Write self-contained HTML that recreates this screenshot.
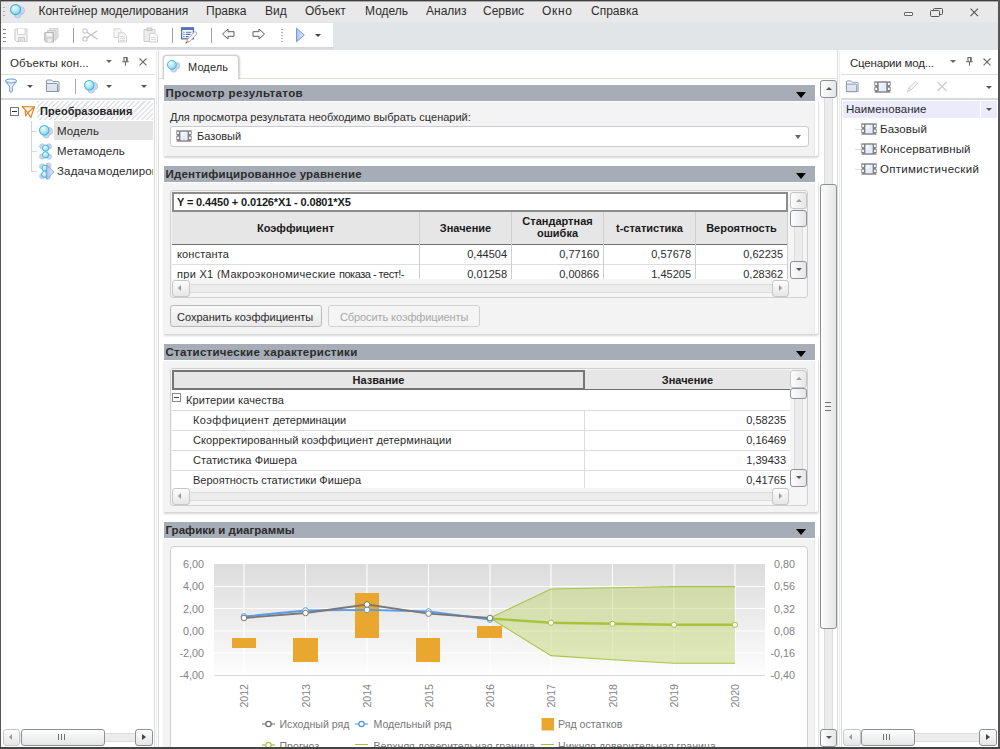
<!DOCTYPE html>
<html lang="ru">
<head>
<meta charset="utf-8">
<title>Контейнер моделирования</title>
<style>
html,body{margin:0;padding:0;}
body{width:1000px;height:749px;overflow:hidden;background:#fff;font-family:"Liberation Sans",sans-serif;font-size:11px;color:#2b2b2b;position:relative;}
.a{position:absolute;}
.t{position:absolute;white-space:nowrap;line-height:14px;}
#win{position:absolute;left:0;top:0;width:1000px;height:749px;overflow:hidden;}
/* frame */
#ftop{left:0;top:0;width:1000px;height:2px;background:linear-gradient(#3e3e3e 0,#3e3e3e 50%,#a8a8a8 50%,#a8a8a8 100%);}
#fleft{left:0;top:0;width:1px;height:749px;background:#555;}
#fright{left:998px;top:0;width:2px;height:749px;background:#555;}
#fbot{left:0;top:747px;width:1000px;height:2px;background:#444;}
/* menu */
#menu{left:1px;top:1px;width:998px;height:21px;background:#e9e9e9;}
.mi{position:absolute;top:4px;font-size:12px;line-height:14px;color:#2e2e2e;white-space:nowrap;}
/* toolbar */
#tb{left:1px;top:23px;width:332px;height:24px;background:#fff;}
#tbr{left:1px;top:22px;width:998px;height:28px;background:#e2e5e8;}
#strip{left:1px;top:47px;width:332px;height:3px;background:linear-gradient(#d3d5da,#d8dade 50%,#e2e5e8);}
/* left panel */
#lp{left:1px;top:50px;width:154px;height:697px;background:#fff;}
/* center */
#cp{left:163px;top:50px;width:674px;height:697px;background:#fff;}
/* right */
#rp{left:843px;top:50px;width:155px;height:697px;background:#fff;}
.sech{position:absolute;left:164px;width:651px;height:16px;background:#a6adb7;}
.sech span{position:absolute;left:1.500px;top:1px;font-weight:bold;font-size:11.500px;letter-spacing:0.28px;line-height:14px;color:#2b2b2b;white-space:nowrap;}
.sech i{position:absolute;left:632.300px;top:7px;width:0;height:0;border-left:5px solid transparent;border-right:5px solid transparent;border-top:6px solid #000;}
.secb{position:absolute;left:164px;width:651px;border-top:1px solid #fff;box-sizing:border-box;background:#f3f3f3;box-shadow:0 2px 2px rgba(0,0,0,.17);}
.secb::after{content:"";position:absolute;left:651px;top:-1px;bottom:0;width:4px;box-sizing:border-box;background:#fff;border-right:1px solid #e4e4e4;border-bottom-right-radius:3px;box-shadow:0 2px 2px rgba(0,0,0,.17);}
.sbb{box-sizing:border-box;border:1px solid #8b9099;border-radius:3px;background:linear-gradient(#fdfdfd,#e6e6e6);}
.sbbv{box-sizing:border-box;border:1px solid #8b9099;border-radius:3px;background:linear-gradient(90deg,#fdfdfd,#e6e6e6);}
.b{font-weight:bold;color:#1a1a1a}
.c{text-align:center}
.r{text-align:right}
.vl{width:1px;background:#cfcfcf}
.btn{box-sizing:border-box;border:1px solid #b9b9b9;border-radius:3px;background:linear-gradient(#f9f9f9,#e9e9e9);}
.hl{left:172px;width:618px;height:1px;background:#dcdcdc}
</style>
</head>
<body>
<div id="win">
<div class="a" id="menu"></div>
<div class="a" id="tbr"></div>
<div class="a" id="tb"></div>
<div class="a" id="strip"></div>
<div class="a" id="lp"></div>
<div class="a" id="cp"></div>
<div class="a" id="rp"></div>
<!--MENU-->
<!-- menu -->
<div class="a" style="left:3px;top:7px;width:2px;height:1px;background:#ababab;box-shadow:0 4px 0 #ababab,0 8px 0 #ababab;"></div>
<svg class="a" style="left:9px;top:3px" width="18" height="17" viewBox="0 0 18 17">
 <defs><radialGradient id="gA" cx="35%" cy="30%" r="75%"><stop offset="0" stop-color="#f0fbfc"/><stop offset="0.6" stop-color="#b5e4ec"/><stop offset="1" stop-color="#7fd0e6"/></radialGradient></defs>
 <circle cx="11.7" cy="7.6" r="3.9" fill="#ccd5ee" stroke="#b3bfe3" stroke-width=".8"/>
 <circle cx="8.7" cy="11.6" r="3.4" fill="#ccd5ee" stroke="#b3bfe3" stroke-width=".8"/>
 <circle cx="6.6" cy="6.6" r="5" fill="url(#gA)" stroke="#35b6e6" stroke-width="1.1"/>
</svg>
<span class="mi" style="left:38.500px;letter-spacing:-0.02px">Контейнер моделирования</span>
<span class="mi" style="left:206px">Правка</span>
<span class="mi" style="left:265px">Вид</span>
<span class="mi" style="left:305px">Объект</span>
<span class="mi" style="left:365px">Модель</span>
<span class="mi" style="left:426px">Анализ</span>
<span class="mi" style="left:483px">Сервис</span>
<span class="mi" style="left:542px;letter-spacing:0.7px">Окно</span>
<span class="mi" style="left:591px">Справка</span>
<!-- window buttons -->
<div class="a" style="left:904px;top:12px;width:7px;height:2px;border:1px solid #666;border-radius:1px;box-sizing:content-box;background:#f4f4f4"></div>
<div class="a" style="left:933px;top:8px;width:8px;height:5px;border:1px solid #555;border-radius:1.500px"></div>
<div class="a" style="left:930px;top:10px;width:8px;height:5px;border:1px solid #555;border-radius:1.500px;background:#e9e9e9"></div>
<svg class="a" style="left:969px;top:7px" width="11" height="11" viewBox="0 0 11 11"><path d="M1.5 1.700 L9 9.200 M9 1.700 L1.5 9.200" stroke="#555" stroke-width="1.1" fill="none"/></svg>
<!--/MENU-->
<!--TOOLBAR-->
<!-- toolbar -->
<div class="a" style="left:3px;top:29px;width:3px;height:1px;background:#8c8c8c;box-shadow:0 4px 0 #8c8c8c,0 8px 0 #8c8c8c,0 12px 0 #8c8c8c;"></div>
<!-- save (disabled) -->
<svg class="a" style="left:14px;top:28px" width="15" height="15" viewBox="0 0 15 15"><path d="M1.5 1 H13 V13.5 H2.5 L1 12 V1.5 Z" fill="#f3f3f3" stroke="#c9c9c9"/><path d="M3.5 1 V6.5 H11 V1" fill="#fff" stroke="#d4d4d4"/><path d="M4.5 13.5 V9.5 H10.5 V13.5" fill="#e9e9e9" stroke="#c9c9c9"/><rect x="6" y="10.5" width="1.5" height="3" fill="#d0d0d0"/></svg>
<!-- save all (disabled) -->
<svg class="a" style="left:44px;top:28px" width="15" height="15" viewBox="0 0 15 15"><path d="M5.5 .5 H14 V10 H5.5Z" fill="#ededed" stroke="#cfcfcf"/><path d="M3.5 2.5 H12 V12 H3.5Z" fill="#e4e4e4" stroke="#c6c6c6"/><path d="M1 4.5 H9.5 V14 H2 L.7 12.8 V4.8Z" fill="#d6d6d6" stroke="#b5b5b5"/><rect x="2.5" y="5" width="5.5" height="3.5" fill="#f4f4f4"/><rect x="3.5" y="11" width="4" height="3" fill="#efefef"/></svg>
<div class="a" style="left:73px;top:28px;width:1px;height:15px;background:#9f9f9f"></div>
<!-- scissors -->
<svg class="a" style="left:82px;top:28px" width="17" height="14" viewBox="0 0 17 14"><circle cx="3" cy="3" r="2.2" fill="none" stroke="#c9c9c9" stroke-width="1.2"/><circle cx="3" cy="11" r="2.2" fill="none" stroke="#c9c9c9" stroke-width="1.2"/><path d="M4.8 4.2 L15.5 11.3 M4.8 9.8 L15.5 2.7" stroke="#c4c4c4" stroke-width="1.3" fill="none"/></svg>
<!-- copy -->
<svg class="a" style="left:113px;top:28px" width="15" height="15" viewBox="0 0 15 15"><path d="M1 .8 H6.5 L8.5 3 V9.5 H1Z" fill="#f6f6f6" stroke="#d6d6d6"/><path d="M5.5 4.8 H11 L13.5 7.5 V14 H5.5Z" fill="#f6f6f6" stroke="#d2d2d2"/><path d="M7 8.5H12M7 10.5H12M7 12.5H12" stroke="#dcdcdc"/></svg>
<!-- paste -->
<svg class="a" style="left:143px;top:27px" width="16" height="16" viewBox="0 0 16 16"><path d="M1 2.5 H12 V14.5 H1Z" fill="#ececec" stroke="#cdcdcd"/><path d="M4 1 H9 V3.5 H4Z" fill="#e2e2e2" stroke="#c4c4c4"/><path d="M6.5 6.5 H12 L14.5 9 V15 H6.5Z" fill="#fafafa" stroke="#d0d0d0"/><path d="M8 10.5H13M8 12.5H13" stroke="#dcdcdc"/></svg>
<div class="a" style="left:172px;top:28px;width:1px;height:15px;background:#9f9f9f"></div>
<!-- edit -->
<svg class="a" style="left:180px;top:27px" width="18" height="17" viewBox="0 0 18 17"><rect x="1.6" y="1" width="11.800" height="10.800" fill="#fff" stroke="#4f73b8" stroke-width="1.3"/><rect x="1" y=".4" width="13" height="2.600" fill="#4f73b8"/><path d="M3.300 5.200H4.600M5.800 5.200H11.500M3.300 7.400H4.600M5.800 7.400H10.500M3.300 9.600H4.600M5.800 9.600H8.500" stroke="#4f73b8" stroke-width="1.1"/><path d="M6.800 13.200 L14.200 5 Q15.200 4.200 16.200 5.200 Q17.200 6.200 16.400 7.200 L9 15.300 Z" fill="#fafafa" stroke="#9a9a9a" stroke-width=".8"/><path d="M6.800 13.200 L9 15.300 L5.400 16.500 Z" fill="#f0922c"/><path d="M5.400 16.500 L6 15 L7 15.900 Z" fill="#444"/></svg>
<div class="a" style="left:211px;top:28px;width:1px;height:15px;background:#9f9f9f"></div>
<!-- arrows -->
<svg class="a" style="left:221px;top:27px" width="15" height="14" viewBox="0 0 15 14"><path d="M1.5 7 L7 2 V4.700 H13 V9.300 H7 V12 Z" fill="#fff" stroke="#555" stroke-width=".95" stroke-linejoin="miter"/></svg>
<svg class="a" style="left:251px;top:27px" width="15" height="14" viewBox="0 0 15 14"><path d="M13.500 7 L8 2 V4.700 H2 V9.300 H8 V12 Z" fill="#fff" stroke="#555" stroke-width=".95" stroke-linejoin="miter"/></svg>
<div class="a" style="left:281px;top:29px;width:2px;height:1px;background:#b5b5b5;box-shadow:0 3px 0 #b5b5b5,0 6px 0 #b5b5b5,0 9px 0 #b5b5b5,0 12px 0 #b5b5b5;"></div>
<svg class="a" style="left:295px;top:27px" width="11" height="16" viewBox="0 0 11 16"><defs><linearGradient id="gP" x1="0" y1="0" x2="1" y2="0"><stop offset="0" stop-color="#a9c0ee"/><stop offset="1" stop-color="#e6edfb"/></linearGradient></defs><path d="M1.5 1.2 L9.3 8 L1.5 14.8 Z" fill="url(#gP)" stroke="#7596dc" stroke-width="1"/></svg>
<div class="a" style="left:315px;top:34px;width:0;height:0;border-left:3px solid transparent;border-right:3px solid transparent;border-top:3px solid #444"></div>
<!--/TOOLBAR-->
<!--LEFT-->
<!-- left panel -->
<span class="t" style="left:10px;top:56px;font-size:11.500px;letter-spacing:0.05px;color:#2b2b2b">Объекты кон...</span>
<div class="a" style="left:106px;top:60px;width:0;height:0;border-left:3px solid transparent;border-right:3px solid transparent;border-top:3px solid #666"></div>
<svg class="a" style="left:121px;top:56px" width="9" height="11" viewBox="0 0 9 11"><path d="M2.500 1.500 H6.500 M3 1.500 V5.500 M5.800 1.500 V5.500 M1.200 5.800 H7.800 M4.500 6 V9.800" stroke="#666" stroke-width="1.1" fill="none"/><path d="M5 1.500H6.600V5.500H5z" fill="#666"/></svg>
<svg class="a" style="left:138px;top:57px" width="10" height="10" viewBox="0 0 10 10"><path d="M1.500 1.500 L8.500 8.300 M8.500 1.500 L1.500 8.300" stroke="#6a6a6a" stroke-width="1.05"/></svg>
<div class="a" style="left:1px;top:74px;width:154px;height:1px;background:#dadde3"></div>
<!-- left toolbar -->
<svg class="a" style="left:4px;top:78px" width="14" height="16" viewBox="0 0 14 16"><path d="M1.400 3.200 L5.700 8.800 V13.600 Q7 14.800 8.300 13.600 V8.800 L12.600 3.200" fill="#edf3fb" stroke="#6d9ad8" stroke-width="1"/><ellipse cx="7" cy="3" rx="5.600" ry="2" fill="#f4f8fd" stroke="#6d9ad8" stroke-width="1"/><path d="M3.200 3.600 Q7 5.600 10.800 3.600" fill="none" stroke="#a8c3e8" stroke-width=".8"/></svg>
<div class="a" style="left:26.500px;top:85px;width:0;height:0;border-left:3px solid transparent;border-right:3px solid transparent;border-top:3px solid #555"></div>
<svg class="a" style="left:45px;top:79px" width="16" height="14" viewBox="0 0 16 14"><path d="M1.5 12.5 V2 Q1.5 1 2.5 1 H6.5 L8 2.5 H13 Q14 2.5 14 3.5 V12.5 Z" fill="#eef1f6" stroke="#8b97ab" stroke-width="1"/><path d="M1.5 12.5 V4.5 H11.5 Q12.5 4.5 12.5 5.5 V12.5Z" fill="#dfe5ef" stroke="#8b97ab" stroke-width="1"/></svg>
<div class="a" style="left:75px;top:79px;width:1px;height:15px;background:#a9a9a9"></div>
<svg class="a" style="left:83px;top:79px" width="17" height="16" viewBox="0 0 18 17"><circle cx="11.7" cy="7.6" r="3.9" fill="#ccd5ee" stroke="#b3bfe3" stroke-width=".8"/><circle cx="8.7" cy="11.6" r="3.4" fill="#ccd5ee" stroke="#b3bfe3" stroke-width=".8"/><circle cx="6.6" cy="6.6" r="5" fill="url(#gA)" stroke="#35b6e6" stroke-width="1.1"/></svg>
<div class="a" style="left:106px;top:85px;width:0;height:0;border-left:3px solid transparent;border-right:3px solid transparent;border-top:3px solid #555"></div>
<div class="a" style="left:141px;top:85px;width:0;height:0;border-left:3px solid transparent;border-right:3px solid transparent;border-top:3px solid #555"></div>
<div class="a" style="left:1px;top:98px;width:154px;height:2px;background:#d6d9dd"></div>
<!-- tree -->
<div class="a" style="left:37px;top:101px;width:116px;height:19px;background:repeating-linear-gradient(135deg,#e0e3e7 0,#e0e3e7 1.5px,#fefefe 1.5px,#fefefe 3.6px);"></div>
<div class="a" style="left:54px;top:121px;width:99px;height:19px;background:#e4e4e4"></div>
<div class="a" style="left:31px;top:121px;width:1px;height:51px;background:#d4d4d4"></div>
<div class="a" style="left:31px;top:131px;width:6px;height:1px;background:#dadada"></div>
<div class="a" style="left:31px;top:151px;width:6px;height:1px;background:#dadada"></div>
<div class="a" style="left:31px;top:171px;width:6px;height:1px;background:#dadada"></div>
<div class="a" style="left:10px;top:107px;width:7px;height:7px;border:1px solid #777;background:#fff"></div>
<div class="a" style="left:12px;top:111px;width:5px;height:1px;background:#333"></div>
<svg class="a" style="left:21px;top:105px" width="15" height="14" viewBox="0 0 15 14"><path d="M1.2 1.5 L13.5 1.8 L9.8 12.6 L6.8 7.8 Z M6.8 7.8 L13.5 1.8 M4 4.5 L4.6 10.8 L6.8 7.8" fill="#fdf3e6" stroke="#e0882f" stroke-width="1.2" stroke-linejoin="round"/></svg>
<span class="t" style="left:40px;top:104px;font-size:11px;font-weight:bold;letter-spacing:0.05px;color:#262626">Преобразования</span>
<svg class="a" style="left:38px;top:123.500px" width="17" height="16" viewBox="0 0 18 17"><circle cx="11.7" cy="7.6" r="3.9" fill="#ccd5ee" stroke="#b3bfe3" stroke-width=".8"/><circle cx="8.7" cy="11.6" r="3.4" fill="#ccd5ee" stroke="#b3bfe3" stroke-width=".8"/><circle cx="6.6" cy="6.6" r="5" fill="url(#gA)" stroke="#35b6e6" stroke-width="1.1"/></svg>
<span class="t" style="left:57px;top:124px;font-size:11.500px;letter-spacing:0.12px;margin-top:-0.5px">Модель</span>
<svg class="a" style="left:39px;top:143px" width="14" height="17" viewBox="0 0 14 17"><g fill="#ccd5ee" stroke="#b3bfe3" stroke-width=".7"><circle cx="3.2" cy="3.4" r="2.6"/><circle cx="10" cy="3.4" r="2.6"/><circle cx="3.2" cy="13.6" r="2.6"/><circle cx="10" cy="13.6" r="2.6"/></g><circle cx="6.6" cy="5.2" r="3.1" fill="url(#gA)" stroke="#2fb2e4" stroke-width=".9"/><circle cx="6.6" cy="11.8" r="3.1" fill="url(#gA)" stroke="#2fb2e4" stroke-width=".9"/></svg>
<span class="t" style="left:57px;top:144px;font-size:11.500px;letter-spacing:0.12px;margin-top:-0.5px">Метамодель</span>
<svg class="a" style="left:39px;top:162px" width="16" height="18" viewBox="0 0 16 18"><g fill="#ccd5ee" stroke="#b3bfe3" stroke-width=".7"><circle cx="3.2" cy="4.4" r="2.6"/><circle cx="9.5" cy="3.6" r="2.6"/><circle cx="3.2" cy="14.2" r="2.6"/><circle cx="9" cy="15" r="2.4"/></g><circle cx="6" cy="6.2" r="3" fill="url(#gA)" stroke="#2fb2e4" stroke-width=".9"/><circle cx="5.6" cy="12.4" r="3" fill="url(#gA)" stroke="#2fb2e4" stroke-width=".9"/><path d="M7.600 3 L15 10 L7.600 17 Z" fill="url(#gP)" stroke="#7f9fe0" stroke-width=".9"/></svg>
<div class="a" style="left:57px;top:161px;width:96px;height:20px;overflow:hidden"><span class="t" style="left:0;top:3px;font-size:11.500px;letter-spacing:0.15px;word-spacing:-2px;margin-top:-0.5px">Задача моделирования</span></div>
<!-- left h scrollbar -->
<div class="a" style="left:3px;top:733px;width:150px;height:9px;background:#ececec;border-top:1px solid #dcdcdc;border-bottom:1px solid #dcdcdc;box-sizing:border-box"></div>
<div class="a sbb" style="left:3px;top:729px;width:17px;height:17px;border-color:#c4c7cc"></div>
<div class="a" style="left:9px;top:734px;width:0;height:0;border-top:3px solid transparent;border-bottom:3px solid transparent;border-right:3px solid #999"></div>
<div class="a sbb" style="left:21px;top:729px;width:84px;height:17px"></div>
<div class="a" style="left:58px;top:734px;width:1px;height:6px;background:#707070;box-shadow:3px 0 0 #707070,6px 0 0 #707070"></div>
<div class="a sbb" style="left:135px;top:729px;width:18px;height:17px"></div>
<div class="a" style="left:142px;top:734px;width:0;height:0;border-top:3.500px solid transparent;border-bottom:3.500px solid transparent;border-left:4px solid #444"></div>
<!--/LEFT-->
<!--CENTER-->
<!-- splitter left -->
<div class="a" style="left:156px;top:51px;width:1px;height:696px;background:#ececec"></div>
<div class="a" style="left:158px;top:50px;width:1px;height:697px;background:#dcdcd8"></div>
<div class="a" style="left:154px;top:98px;width:1px;height:649px;background:#d8dbe0"></div>
<!-- tab strip -->
<div class="a" style="left:159px;top:78px;width:678px;height:1px;background:#deded6"></div>
<div class="a" style="left:163px;top:55px;width:76px;height:24px;box-sizing:border-box;border:1px solid #cfcfcf;border-bottom:none;border-radius:4px 4px 0 0;background:#fff;box-shadow:1px 0 2px rgba(0,0,0,.18),-1px 0 2px rgba(0,0,0,.10)"></div>
<div class="a" style="left:164px;top:78px;width:74px;height:2px;background:#fff"></div>
<svg class="a" style="left:166px;top:59px" width="16" height="15" viewBox="0 0 18 17"><circle cx="11.7" cy="7.6" r="3.9" fill="#ccd5ee" stroke="#b3bfe3" stroke-width=".8"/><circle cx="8.7" cy="11.6" r="3.4" fill="#ccd5ee" stroke="#b3bfe3" stroke-width=".8"/><circle cx="6.6" cy="6.6" r="5" fill="url(#gA)" stroke="#35b6e6" stroke-width="1.1"/></svg>
<span class="t" style="left:188px;top:60px;font-size:11px;letter-spacing:0.1px">Модель</span>
<!-- section 1 -->
<div class="secb" style="top:101px;height:55px"></div>
<div class="sech" style="top:85px"><span style="letter-spacing:0.4px">Просмотр результатов</span><i></i></div>
<span class="t" style="left:170px;top:110px">Для просмотра результата необходимо выбрать сценарий:</span>
<div class="a" style="left:170px;top:126px;width:639px;height:21px;box-sizing:border-box;border:1px solid #c9ccd2;border-radius:3px;background:#fff"></div>
<svg class="a film" style="left:176px;top:130px" width="16" height="12" viewBox="0 0 16 12"><rect x=".3" y=".3" width="15.400" height="11.400" fill="#868686"/><rect x="4" y="1.300" width="8" height="9.400" rx="1" fill="#e6ecfc" stroke="#6e6e6e" stroke-width=".6"/><path d="M5 2.300 H10 L5 7 Z" fill="#f6f8fe"/><path d="M1.200 1.800h1.700v2.300h-1.700zM1.200 6.800h1.700v2.300h-1.700zM13.100 1.800h1.700v2.300h-1.700zM13.100 6.800h1.700v2.300h-1.700z" fill="#fff"/><path d="M0 4.800h1v1.300h-1zM0 10h1v1.200h-1zM15 4.800h1v1.300h-1zM15 10h1v1.200h-1z" fill="#fff" fill-opacity=".75"/></svg>
<span class="t" style="left:197px;top:129px">Базовый</span>
<div class="a" style="left:795px;top:135px;width:0;height:0;border-left:3.500px solid transparent;border-right:3.500px solid transparent;border-top:4px solid #666"></div>
<!-- section 2 -->
<div class="secb" style="top:182px;height:152px"></div>
<div class="sech" style="top:166px"><span style="letter-spacing:0.18px">Идентифицированное уравнение</span><i></i></div>
<div class="a" style="left:170px;top:190px;width:638px;height:108px;box-sizing:border-box;border:1px solid #cfcfcf;border-radius:3px;background:#f5f5f5"></div>
<!-- grid -->
<div class="a" style="left:172px;top:212px;width:616px;height:32px;background:#e6e6e6"></div>
<div class="a" style="left:172px;top:245px;width:616px;height:34px;background:#fff"></div>
<div class="a" style="left:172px;top:244px;width:616px;height:1px;background:#6e6e6e"></div>
<div class="a" style="left:172px;top:264px;width:616px;height:1px;background:#dedede"></div>
<div class="a vl" style="left:419px;top:212px;height:67px"></div>
<div class="a vl" style="left:511px;top:212px;height:67px"></div>
<div class="a vl" style="left:603px;top:212px;height:67px"></div>
<div class="a vl" style="left:695px;top:212px;height:67px"></div>
<div class="a vl" style="left:787px;top:212px;height:67px"></div>
<div class="a" style="left:172px;top:192px;width:616px;height:20px;box-sizing:border-box;border:2px solid #8c8c8c;background:#fff"></div>
<span class="t b" style="left:177px;top:195px;letter-spacing:-0.14px">Y = 0.4450 + 0.0126*X1 - 0.0801*X5</span>
<span class="t b c" style="left:172px;width:247px;top:221px">Коэффициент</span>
<span class="t b c" style="left:420px;width:91px;top:221px">Значение</span>
<span class="t b c" style="left:512px;width:91px;top:215px;line-height:12px;white-space:normal">Стандартная ошибка</span>
<span class="t b c" style="left:604px;width:91px;top:221px">t-статистика</span>
<span class="t b c" style="left:696px;width:91px;top:221px">Вероятность</span>
<span class="t" style="left:177px;top:247px;letter-spacing:0.15px">константа</span>
<span class="t r" style="left:420px;width:87px;top:247px">0,44504</span>
<span class="t r" style="left:512px;width:87px;top:247px">0,77160</span>
<span class="t r" style="left:604px;width:87px;top:247px">0,57678</span>
<span class="t r" style="left:696px;width:87px;top:247px">0,62235</span>
<div class="a" style="left:172px;top:265px;width:616px;height:14px;overflow:hidden">
<span class="t" style="left:5px;top:2px;letter-spacing:0.3px">при X1 (Макроэкономические <span style="letter-spacing:-0.5px">показа - тест!-</span></span>
<span class="t r" style="left:248px;width:87px;top:2px">0,01258</span>
<span class="t r" style="left:340px;width:87px;top:2px">0,00866</span>
<span class="t r" style="left:432px;width:87px;top:2px">1,45205</span>
<span class="t r" style="left:524px;width:87px;top:2px">0,28362</span>
</div>
<!-- inner v scrollbar -->
<div class="a" style="left:794px;top:208px;width:9px;height:54px;background:#ececec;border-left:1px solid #dcdcdc;border-right:1px solid #dcdcdc;box-sizing:border-box"></div>
<div class="a sbbv" style="left:790px;top:192px;width:17px;height:17px;border-color:#c4c7cc"></div>
<div class="a" style="left:795px;top:198px;width:0;height:0;border-left:3px solid transparent;border-right:3px solid transparent;border-bottom:3px solid #a0a0a0;margin:1px 0 0 .5px"></div>
<div class="a sbbv" style="left:790px;top:210px;width:17px;height:17px"></div>
<div class="a sbbv" style="left:790px;top:261px;width:17px;height:18px"></div>
<div class="a" style="left:795px;top:268px;width:0;height:0;border-left:3px solid transparent;border-right:3px solid transparent;border-top:3px solid #555;margin:0 0 0 .5px"></div>
<!-- inner h scrollbar -->
<div class="a" style="left:189px;top:284px;width:584px;height:9px;background:#ececec;border-top:1px solid #dcdcdc;border-bottom:1px solid #dcdcdc;box-sizing:border-box"></div>
<div class="a sbb" style="left:172px;top:280px;width:18px;height:17px;border-color:#c4c7cc"></div>
<div class="a" style="left:178px;top:285px;width:0;height:0;border-top:3px solid transparent;border-bottom:3px solid transparent;border-right:3px solid #999"></div>
<div class="a sbb" style="left:772px;top:280px;width:17px;height:17px;border-color:#c4c7cc"></div>
<div class="a" style="left:779px;top:285px;width:0;height:0;border-top:3px solid transparent;border-bottom:3px solid transparent;border-left:3px solid #999"></div>
<!-- buttons -->
<div class="a btn" style="left:170px;top:305px;width:152px;height:22px"><span class="t" style="left:6px;top:4px;font-size:11px">Сохранить коэффициенты</span></div>
<div class="a btn" style="left:328px;top:305px;width:152px;height:22px;border-color:#d0d0d0;background:#f4f4f4"><span class="t" style="left:11px;top:4px;font-size:11px;letter-spacing:-0.1px;color:#a8a8a8">Сбросить коэффициенты</span></div>
<!--C2-->
<!-- section 3 -->
<div class="secb" style="top:360px;height:152px"></div>
<div class="sech" style="top:344px"><span>Статистические характеристики</span><i></i></div>
<div class="a" style="left:170px;top:368px;width:638px;height:138px;box-sizing:border-box;border:1px solid #cfcfcf;border-radius:3px;background:#f5f5f5"></div>
<div class="a" style="left:172px;top:370px;width:618px;height:118px;background:#fff"></div>
<div class="a" style="left:172px;top:370px;width:618px;height:20px;background:#e6e6e6"></div>
<div class="a" style="left:172px;top:389px;width:618px;height:1px;background:#6e6e6e"></div>
<div class="a" style="left:172px;top:370px;width:413px;height:20px;box-sizing:border-box;border:2px solid #757575;background:#e6e6e6"></div>
<span class="t b c" style="left:172px;width:413px;top:373px">Название</span>
<span class="t b c" style="left:585px;width:205px;top:373px">Значение</span>
<div class="a hl" style="top:410px"></div><div class="a hl" style="top:430px"></div><div class="a hl" style="top:450px"></div><div class="a hl" style="top:470px"></div>
<div class="a" style="left:584px;top:410px;width:1px;height:78px;background:#dcdcdc"></div>
<div class="a" style="left:172px;top:393px;width:7px;height:7px;border:1px solid #8a8a8a;background:#fff"></div>
<div class="a" style="left:174px;top:397px;width:5px;height:1px;background:#444"></div>
<span class="t" style="left:186px;top:393px;letter-spacing:0.1px">Критерии качества</span>
<span class="t" style="left:193px;top:413px;letter-spacing:0.4px">Коэффициент <span style="letter-spacing:-0.05px">детерминации</span></span>
<span class="t" style="left:193px;top:433px;letter-spacing:0.1px">Скорректированный коэффициент детерминации</span>
<span class="t" style="left:193px;top:453px;letter-spacing:0.08px">Статистика Фишера</span>
<span class="t r" style="left:585px;width:201px;top:413px">0,58235</span>
<span class="t r" style="left:585px;width:201px;top:433px">0,16469</span>
<span class="t r" style="left:585px;width:201px;top:453px">1,39433</span>
<div class="a" style="left:172px;top:471px;width:618px;height:17px;overflow:hidden">
<span class="t" style="left:21px;top:2px">Вероятность статистики Фишера</span>
<span class="t r" style="left:413px;width:201px;top:2px">0,41765</span>
</div>
<!-- inner v scrollbar -->
<div class="a" style="left:794px;top:386px;width:9px;height:86px;background:#ececec;border-left:1px solid #dcdcdc;border-right:1px solid #dcdcdc;box-sizing:border-box"></div>
<div class="a sbbv" style="left:790px;top:370px;width:17px;height:18px;border-color:#c4c7cc"></div>
<div class="a" style="left:795px;top:376px;width:0;height:0;border-left:3px solid transparent;border-right:3px solid transparent;border-bottom:3px solid #a0a0a0;margin:1px 0 0 .5px"></div>
<div class="a sbbv" style="left:790px;top:388px;width:17px;height:11px"></div>
<div class="a sbbv" style="left:790px;top:469px;width:17px;height:18px"></div>
<div class="a" style="left:795px;top:476px;width:0;height:0;border-left:3px solid transparent;border-right:3px solid transparent;border-top:3px solid #555;margin:0 0 0 .5px"></div>
<!-- inner h scrollbar -->
<div class="a" style="left:189px;top:492px;width:584px;height:9px;background:#ececec;border-top:1px solid #dcdcdc;border-bottom:1px solid #dcdcdc;box-sizing:border-box"></div>
<div class="a sbb" style="left:172px;top:488px;width:18px;height:17px;border-color:#c4c7cc"></div>
<div class="a" style="left:178px;top:493px;width:0;height:0;border-top:3px solid transparent;border-bottom:3px solid transparent;border-right:3px solid #999"></div>
<div class="a sbb" style="left:772px;top:488px;width:17px;height:17px;border-color:#c4c7cc"></div>
<div class="a" style="left:779px;top:493px;width:0;height:0;border-top:3px solid transparent;border-bottom:3px solid transparent;border-left:3px solid #999"></div>
<!-- section 4 -->
<div class="secb" style="top:538px;height:220px"></div>
<div class="sech" style="top:522px"><span style="letter-spacing:0.02px">Графики и диаграммы</span><i></i></div>
<div class="a" style="left:170px;top:546px;width:638px;height:220px;box-sizing:border-box;border:1px solid #cfcfcf;border-radius:4px;background:#fff"></div>
<!--CHART-->
<svg class="a" style="left:171px;top:547px" width="636" height="200" viewBox="171 547 636 200" font-family="'Liberation Sans',sans-serif" font-size="11">
<defs><linearGradient id="gPlot" x1="0" y1="0" x2="0" y2="1"><stop offset="0" stop-color="#dcdcdc"/><stop offset="1" stop-color="#fdfdfd"/></linearGradient></defs>
<rect x="214" y="564" width="551" height="111" fill="url(#gPlot)"/>
<path d="M214 675.500H765" stroke="#dcdcdc" stroke-width="1"/>
<g stroke="#fff" stroke-width="1.1">
<path d="M214 586.500H765M214 608.500H765M214 631H765M214 653H765"/>
<path d="M244 564V675M305.500 564V675M367 564V675M428.500 564V675M490 564V675M551 564V675M612.500 564V675M674 564V675M735 564V675"/>
</g>
<!-- bars -->
<g fill="#eaa72f">
<rect x="232" y="638" width="24" height="10"/>
<rect x="293" y="638" width="25" height="24"/>
<rect x="355" y="593" width="24" height="45"/>
<rect x="416" y="638" width="24" height="24"/>
<rect x="477" y="626" width="25" height="12"/>
</g>
<!-- band -->
<path d="M490 618 L551 589 L612.500 587.700 L674 586.600 L735 586.600 L735 663.300 L674 663.300 L612.500 659.800 L551 655.600 Z" fill="#b8d05e" fill-opacity=".42"/>
<path d="M490 618 L551 589 L612.500 587.700 L674 586.600 L735 586.600 M490 618 L551 655.600 L612.500 659.800 L674 663.300 L735 663.300" fill="none" stroke="#a9c545" stroke-width="1.1"/>
<!-- lines -->
<polyline points="244,616.500 305.500,610.500 367,609.800 428.500,611.500 490,619.500" fill="none" stroke="#5a9bea" stroke-width="1.8"/>
<polyline points="244,618 305.500,613 367,604.500 428.500,613.600 490,618" fill="none" stroke="#787878" stroke-width="1.8"/>
<polyline points="490,618.500 551,622.700 612.500,623.800 674,624.800 735,624.800" fill="none" stroke="#a6c43a" stroke-width="2.4"/>
<g fill="#fff" stroke="#5a9bea" stroke-width="1"><circle cx="244" cy="616.500" r="2.800"/><circle cx="305.500" cy="610.500" r="2.800"/><circle cx="367" cy="609.800" r="2.800"/><circle cx="428.500" cy="611.500" r="2.800"/><circle cx="490" cy="619.500" r="2.800"/></g>
<g fill="#fff" stroke="#787878" stroke-width="1"><circle cx="244" cy="618" r="2.800"/><circle cx="305.500" cy="613" r="2.800"/><circle cx="367" cy="604.500" r="2.800"/><circle cx="428.500" cy="613.600" r="2.800"/><circle cx="490" cy="618" r="2.800"/></g>
<g fill="#fff" stroke="#a6c43a" stroke-width="1"><circle cx="551" cy="622.700" r="2.600"/><circle cx="612.500" cy="623.800" r="2.600"/><circle cx="674" cy="624.800" r="2.600"/><circle cx="735" cy="624.800" r="2.600"/></g>
<!-- axis labels -->
<g fill="#828282" text-anchor="end" font-size="10.800">
<text x="204" y="568">6,00</text><text x="204" y="590">4,00</text><text x="204" y="612.500">2,00</text><text x="204" y="635">0,00</text><text x="204" y="657">-2,00</text><text x="204" y="679">-4,00</text>
</g>
<g fill="#828282" text-anchor="end" font-size="10.800">
<text x="795" y="568">0,80</text><text x="795" y="590">0,56</text><text x="795" y="612.500">0,32</text><text x="795" y="635">0,08</text><text x="795" y="657">-0,16</text><text x="795" y="679">-0,40</text>
</g>
<g fill="#828282" text-anchor="end" font-size="10.600">
<text transform="translate(248,684) rotate(-90)">2012</text>
<text transform="translate(309.500,684) rotate(-90)">2013</text>
<text transform="translate(371,684) rotate(-90)">2014</text>
<text transform="translate(432.500,684) rotate(-90)">2015</text>
<text transform="translate(494,684) rotate(-90)">2016</text>
<text transform="translate(555,684) rotate(-90)">2017</text>
<text transform="translate(616.500,684) rotate(-90)">2018</text>
<text transform="translate(678,684) rotate(-90)">2019</text>
<text transform="translate(739,684) rotate(-90)">2020</text>
</g>
<!-- legend -->
<g fill="#777" font-size="10.600">
<path d="M262 724H275" stroke="#6a6a6a" stroke-width="1"/><circle cx="268.500" cy="724" r="2.700" fill="#fff" stroke="#6a6a6a" stroke-width="1.2"/>
<text x="279.500" y="728">Исходный ряд</text>
<path d="M355 724H368" stroke="#4a90e6" stroke-width="1"/><circle cx="361.500" cy="724" r="2.700" fill="#fff" stroke="#4a90e6" stroke-width="1.2"/>
<text x="373.500" y="728">Модельный ряд</text>
<rect x="541.500" y="718" width="12.500" height="12.500" fill="#eaa72f"/>
<text x="558" y="728">Ряд остатков</text>
<path d="M262 745H275" stroke="#a6c43a" stroke-width="1.3"/><circle cx="268.500" cy="745" r="2.700" fill="#fff" stroke="#a6c43a" stroke-width="1.2"/>
<text x="279.500" y="750">Прогноз</text>
<path d="M355 744.500H368" stroke="#a6c43a" stroke-width="1"/>
<text x="373.500" y="750">Верхняя доверительная граница</text>
<path d="M541 744.500H554" stroke="#a6c43a" stroke-width="1"/>
<text x="558" y="750">Нижняя доверительная граница</text>
</g>
</svg>
<!--/CHART-->

<!--/CENTER-->
<!--RIGHT-->
<!-- main v scrollbar -->
<div class="a" style="left:824px;top:96px;width:9px;height:636px;background:#ececec;border-left:1px solid #dcdcdc;border-right:1px solid #dcdcdc;box-sizing:border-box"></div>
<div class="a sbbv" style="left:820px;top:80px;width:17px;height:18px"></div>
<div class="a" style="left:825px;top:86px;width:0;height:0;border-left:3px solid transparent;border-right:3px solid transparent;border-bottom:3px solid #555;margin:1px 0 0 .5px"></div>
<div class="a sbbv" style="left:820px;top:184px;width:17px;height:445px"></div>
<div class="a" style="left:825px;top:402px;width:6px;height:1px;background:#707070;box-shadow:0 4px 0 #707070,0 8px 0 #707070"></div>
<div class="a sbbv" style="left:820px;top:729px;width:17px;height:18px"></div>
<div class="a" style="left:825px;top:736px;width:0;height:0;border-left:3px solid transparent;border-right:3px solid transparent;border-top:3px solid #555;margin:0 0 0 .5px"></div>
<!-- splitter right -->
<div class="a" style="left:837px;top:50px;width:1px;height:697px;background:#dcdcd8"></div>
<div class="a" style="left:839px;top:51px;width:1px;height:696px;background:#ececec"></div>
<!-- right panel -->
<span class="t" style="left:850px;top:56px;font-size:11.500px;letter-spacing:-0.2px;color:#2b2b2b">Сценарии мод...</span>
<div class="a" style="left:950px;top:60px;width:0;height:0;border-left:3px solid transparent;border-right:3px solid transparent;border-top:3px solid #666"></div>
<svg class="a" style="left:965px;top:56px" width="9" height="11" viewBox="0 0 9 11"><path d="M2.500 1.500 H6.500 M3 1.500 V5.500 M5.800 1.500 V5.500 M1.200 5.800 H7.800 M4.500 6 V9.800" stroke="#666" stroke-width="1.1" fill="none"/><path d="M5 1.500H6.600V5.500H5z" fill="#666"/></svg>
<svg class="a" style="left:982px;top:57px" width="10" height="10" viewBox="0 0 10 10"><path d="M1.500 1.500 L8.500 8.300 M8.500 1.500 L1.500 8.300" stroke="#6a6a6a" stroke-width="1.05"/></svg>
<div class="a" style="left:841px;top:74px;width:157px;height:1px;background:#dadde3"></div>
<svg class="a" style="left:845px;top:80px" width="15" height="13" viewBox="0 0 16 14"><path d="M1.5 12.5 V2 Q1.5 1 2.5 1 H6.5 L8 2.5 H13 Q14 2.5 14 3.5 V12.5 Z" fill="#eef1f6" stroke="#8b97ab" stroke-width="1"/><path d="M1.5 12.5 V4.5 H11.5 Q12.5 4.5 12.5 5.500 V12.5Z" fill="#dfe5ef" stroke="#8b97ab" stroke-width="1"/></svg>
<svg class="a" style="left:874px;top:81px" width="17" height="12" viewBox="0 0 16 12" preserveAspectRatio="none"><rect x=".3" y=".3" width="15.400" height="11.400" fill="#868686"/><rect x="4" y="1.300" width="8" height="9.400" rx="1" fill="#e6ecfc" stroke="#6e6e6e" stroke-width=".6"/><path d="M5 2.300 H10 L5 7 Z" fill="#f6f8fe"/><path d="M1.200 1.800h1.700v2.300h-1.700zM1.200 6.800h1.700v2.300h-1.700zM13.100 1.800h1.700v2.300h-1.700zM13.100 6.800h1.700v2.300h-1.700z" fill="#fff"/><path d="M0 4.800h1v1.300h-1zM0 10h1v1.200h-1zM15 4.800h1v1.300h-1zM15 10h1v1.200h-1z" fill="#fff" fill-opacity=".75"/></svg>
<svg class="a" style="left:906px;top:80px" width="13" height="13" viewBox="0 0 13 13"><path d="M1.5 11.5 L3 7.500 L9.500 1.500 L11.500 3.500 L5 10 Z M3 7.500 L5 10" fill="#f4f4f4" stroke="#cfcfcf" stroke-width="1"/></svg>
<svg class="a" style="left:936px;top:81px" width="12" height="11" viewBox="0 0 12 11"><path d="M1.500 1 L10.500 10 M10.500 1 L1.500 10" stroke="#cdcdcd" stroke-width="1.3"/></svg>
<div class="a" style="left:985.500px;top:85.500px;width:0;height:0;border-left:3px solid transparent;border-right:3px solid transparent;border-top:3px solid #555"></div>
<div class="a" style="left:841px;top:98px;width:157px;height:2px;background:#d6d9dd"></div>
<div class="a" style="left:841px;top:98px;width:1px;height:649px;background:#d8dbe0"></div>
<div class="a" style="left:843px;top:101px;width:154px;height:17px;background:#ebebfb"></div>
<div class="a" style="left:980px;top:101px;width:1px;height:17px;background:#fff"></div>
<span class="t" style="left:846px;top:102px;font-size:11.500px;letter-spacing:0.07px;margin-top:-0.5px">Наименование</span>
<div class="a" style="left:985.500px;top:108px;width:0;height:0;border-left:3px solid transparent;border-right:3px solid transparent;border-top:3px solid #555"></div>
<div class="a" style="left:855px;top:129px;width:6px;height:1px;background:#dadada"></div>
<div class="a" style="left:855px;top:149px;width:6px;height:1px;background:#dadada"></div>
<div class="a" style="left:855px;top:169px;width:6px;height:1px;background:#dadada"></div>
<svg class="a" style="left:861px;top:123px" width="16" height="12" viewBox="0 0 16 12"><rect x=".3" y=".3" width="15.400" height="11.400" fill="#868686"/><rect x="4" y="1.300" width="8" height="9.400" rx="1" fill="#e6ecfc" stroke="#6e6e6e" stroke-width=".6"/><path d="M5 2.300 H10 L5 7 Z" fill="#f6f8fe"/><path d="M1.200 1.800h1.700v2.300h-1.700zM1.200 6.800h1.700v2.300h-1.700zM13.100 1.800h1.700v2.300h-1.700zM13.100 6.800h1.700v2.300h-1.700z" fill="#fff"/><path d="M0 4.800h1v1.300h-1zM0 10h1v1.200h-1zM15 4.800h1v1.300h-1zM15 10h1v1.200h-1z" fill="#fff" fill-opacity=".75"/></svg>
<svg class="a" style="left:861px;top:143px" width="16" height="12" viewBox="0 0 16 12"><rect x=".3" y=".3" width="15.400" height="11.400" fill="#868686"/><rect x="4" y="1.300" width="8" height="9.400" rx="1" fill="#e6ecfc" stroke="#6e6e6e" stroke-width=".6"/><path d="M5 2.300 H10 L5 7 Z" fill="#f6f8fe"/><path d="M1.200 1.800h1.700v2.300h-1.700zM1.200 6.800h1.700v2.300h-1.700zM13.100 1.800h1.700v2.300h-1.700zM13.100 6.800h1.700v2.300h-1.700z" fill="#fff"/><path d="M0 4.800h1v1.300h-1zM0 10h1v1.200h-1zM15 4.800h1v1.300h-1zM15 10h1v1.200h-1z" fill="#fff" fill-opacity=".75"/></svg>
<svg class="a" style="left:861px;top:163px" width="16" height="12" viewBox="0 0 16 12"><rect x=".3" y=".3" width="15.400" height="11.400" fill="#868686"/><rect x="4" y="1.300" width="8" height="9.400" rx="1" fill="#e6ecfc" stroke="#6e6e6e" stroke-width=".6"/><path d="M5 2.300 H10 L5 7 Z" fill="#f6f8fe"/><path d="M1.200 1.800h1.700v2.300h-1.700zM1.200 6.800h1.700v2.300h-1.700zM13.100 1.800h1.700v2.300h-1.700zM13.100 6.800h1.700v2.300h-1.700z" fill="#fff"/><path d="M0 4.800h1v1.300h-1zM0 10h1v1.200h-1zM15 4.800h1v1.300h-1zM15 10h1v1.200h-1z" fill="#fff" fill-opacity=".75"/></svg>
<span class="t" style="left:880px;top:122px;font-size:11.500px;letter-spacing:0.12px;margin-top:-0.5px">Базовый</span>
<span class="t" style="left:880px;top:142px;font-size:11.500px;letter-spacing:0.12px;margin-top:-0.5px">Консервативный</span>
<span class="t" style="left:880px;top:162px;font-size:11.500px;letter-spacing:0.3px;margin-top:-0.5px">Оптимистический</span>
<!-- right h scrollbar -->
<div class="a" style="left:845px;top:733px;width:150px;height:9px;background:#ececec;border-top:1px solid #dcdcdc;border-bottom:1px solid #dcdcdc;box-sizing:border-box"></div>
<div class="a sbb" style="left:843px;top:729px;width:18px;height:17px;border-color:#c4c7cc"></div>
<div class="a" style="left:849px;top:734px;width:0;height:0;border-top:3px solid transparent;border-bottom:3px solid transparent;border-right:3px solid #999"></div>
<div class="a sbb" style="left:861px;top:729px;width:54px;height:17px"></div>
<div class="a" style="left:883px;top:734px;width:1px;height:6px;background:#707070;box-shadow:3px 0 0 #707070,6px 0 0 #707070"></div>
<div class="a sbb" style="left:979px;top:729px;width:18px;height:17px"></div>
<div class="a" style="left:986px;top:734px;width:0;height:0;border-top:3.500px solid transparent;border-bottom:3.500px solid transparent;border-left:4px solid #444"></div>
<!--/RIGHT-->
<div class="a" id="ftop"></div><div class="a" id="fleft"></div><div class="a" id="fright"></div><div class="a" id="fbot"></div>
</div>
</body>
</html>
